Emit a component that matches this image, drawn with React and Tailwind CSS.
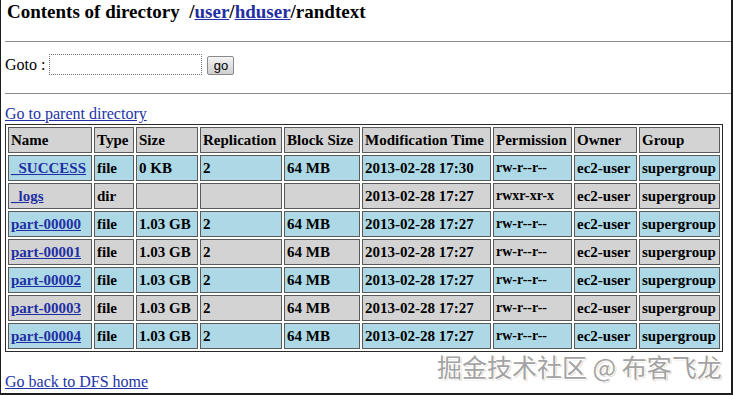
const FILES = [
  ['_SUCCESS', 'file', '0 KB', '2', '64 MB', '2013-02-28 17:30', 'rw-r--r--'],
  ['_logs', 'dir', '', '', '', '2013-02-28 17:27', 'rwxr-xr-x'],
  ['part-00000', 'file', '1.03 GB', '2', '64 MB', '2013-02-28 17:27', 'rw-r--r--'],
  ['part-00001', 'file', '1.03 GB', '2', '64 MB', '2013-02-28 17:27', 'rw-r--r--'],
  ['part-00002', 'file', '1.03 GB', '2', '64 MB', '2013-02-28 17:27', 'rw-r--r--'],
  ['part-00003', 'file', '1.03 GB', '2', '64 MB', '2013-02-28 17:27', 'rw-r--r--'],
  ['part-00004', 'file', '1.03 GB', '2', '64 MB', '2013-02-28 17:27', 'rw-r--r--'],
]

const HEAD = [
  ['Name', 'w-[84px]'],
  ['Type', 'w-[40px]'],
  ['Size', 'w-[62px]'],
  ['Replication', 'w-[82px]'],
  ['Block Size', 'w-[76px]'],
  ['Modification Time', 'w-[129px]'],
  ['Permission', 'w-[79px]'],
  ['Owner', 'w-[63px]'],
  ['Group', 'w-[81px]'],
]

const cell = 'h-[26px] border border-[#5a5a5a] px-[2px] py-0 text-left align-middle leading-[20px] whitespace-nowrap overflow-hidden'

export default function App() {
  return (
    <div className="relative h-[395px] w-[733px] overflow-hidden border-r-2 border-b-2 border-l border-[#1e1e1e] bg-white font-['Liberation_Serif',serif] text-[16px] text-black">
      <div className="pl-[4px]">
        <h1 className="pl-[2px] text-[19px] leading-[24px] font-bold">
          Contents of directory&nbsp;&nbsp;/<a href="#" className="text-[#1f2fa3] underline">user</a>/
          <a href="#" className="text-[#1f2fa3] underline">hduser</a>/randtext
        </h1>
        <hr className="mt-[17px] border-t border-[#8c8c8c]" />
        <div className="mt-[11px] flex h-[21px] items-center">
          <span className="mt-[2px]">Goto :</span>
          <input
            type="text"
            className="ml-[4px] mt-[2px] h-[21px] w-[153px] border border-dotted border-[#777] bg-white outline-none"
          />
          <button className="ml-[5px] mt-[4px] h-[19px] w-[27px] rounded-[2px] border border-[#8a8a8a] bg-gradient-to-b from-[#f4f4f4] to-[#cfcfcf] font-['Liberation_Sans',sans-serif] text-[13px] leading-[15px]">
            go
          </button>
        </div>
        <hr className="mt-[19px] border-t border-[#8c8c8c]" />
        <div className="mt-[11px] h-[18px] leading-[18px]">
          <a href="#" className="text-[#2233a8] underline">Go to parent directory</a>
        </div>
        <table className="mt-[1px] w-[718px] table-fixed border-separate border-spacing-[2px] border border-[#2a2a2a] text-[15px] font-bold">
          <thead>
            <tr className="bg-[#d3d3d3]">
              {HEAD.map(([h, w]) => (
                <th key={h} className={`${cell} ${w} font-bold`}>{h}</th>
              ))}
            </tr>
          </thead>
          <tbody>
            {FILES.map((f, i) => (
              <tr key={f[0]} className={i % 2 === 0 ? 'bg-[#add8e6]' : 'bg-[#d3d3d3]'}>
                <td className={cell}>
                  <a href="#" className="text-[#1f2fa3] underline">{f[0]}</a>
                </td>
                {f.slice(1).map((v, j) => (
                  <td key={j} className={`${cell} ${j === 5 ? 'text-[14px]' : ''}`}>{v}</td>
                ))}
                <td className={cell}>ec2-user</td>
                <td className={cell}>supergroup</td>
              </tr>
            ))}
          </tbody>
        </table>
        <div className="mt-[21px] h-[18px] leading-[18px]">
          <a href="#" className="text-[#2233a8] underline">Go back to DFS home</a>
        </div>
      </div>
      <div className="absolute top-[351px] left-[436px] font-['Noto_Sans_CJK_SC',sans-serif] text-[25px] leading-[30px] text-[#a3a3a3] [text-shadow:1px_1px_0_#fff,-1px_-1px_0_#fff,1px_-1px_0_#fff,-1px_1px_0_#fff,1px_1px_1px_#666]">
        掘金技术社区 @ 布客飞龙
      </div>
    </div>
  )
}
